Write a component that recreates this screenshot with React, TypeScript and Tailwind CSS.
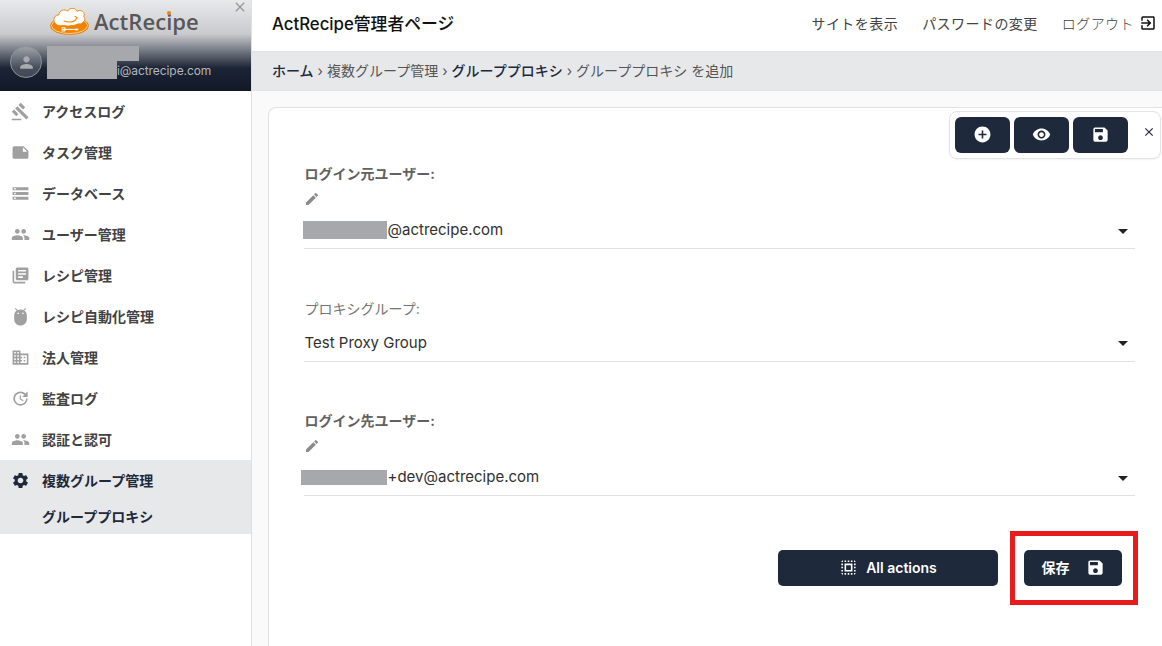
import type { ReactNode } from 'react';
import type { IconType } from 'react-icons';
import {
    MdAddCircle,
    MdArrowDropDown,
    MdClose,
    MdDomain,
    MdEdit,
    MdExitToApp,
    MdGavel,
    MdLibraryBooks,
    MdNote,
    MdPeople,
    MdPerson,
    MdRemoveRedEye,
    MdSave,
    MdSelectAll,
    MdSettings,
    MdStorage,
    MdUpdate,
} from 'react-icons/md';

interface MenuItem {
    label: string;
    icon: IconType;
}

const BugIcon: IconType = ({ size = 18, className }) => (
    <svg className={className} width={size} height={size} viewBox="0 0 24 24" fill="currentColor">
        <path
            fillRule="evenodd"
            d="M4 15.500c0 4.400 3.600 8 8 8s8-3.600 8-8V10.500c0-2.500-1.200-4.700-3.200-6.100l2.300-2.300-.820-.830-2.600 2.500C14.600 3.200 13.300 3 12 3s-2.600.2-3.700.750L5.700 1.270l-.820.830 2.300 2.300C5.200 5.800 4 8 4 10.500v5zM9 7a1 1 0 1 0 0 2 1 1 0 0 0 0-2zm6 0a1 1 0 1 0 0 2 1 1 0 0 0 0-2z"
        />
    </svg>
);

const menuItems: MenuItem[] = [
    { label: 'アクセスログ', icon: MdGavel },
    { label: 'タスク管理', icon: MdNote },
    { label: 'データベース', icon: MdStorage },
    { label: 'ユーザー管理', icon: MdPeople },
    { label: 'レシピ管理', icon: MdLibraryBooks },
    { label: 'レシピ自動化管理', icon: BugIcon },
    { label: '法人管理', icon: MdDomain },
    { label: '監査ログ', icon: MdUpdate },
    { label: '認証と認可', icon: MdPeople },
];

function Logo() {
    return (
        <div className="flex items-center pt-[7px] pl-[50px]">
            <svg width="40" height="29" viewBox="0 0 40 29">
                <ellipse cx="19.5" cy="18.7" rx="19.3" ry="9.1" fill="#f08300" />
                <ellipse cx="19.5" cy="18.5" rx="18" ry="8" fill="none" stroke="#fff" strokeWidth="0.6" />
                <path
                    d="M7 18C3.500 16.500 1.500 8.500 9 7.800c0-4.500 6-6.300 8.500-3.600C19.500.3 26 .8 27 4.300c4-2.300 9 1.200 6.700 5.200 3 3.500-.7 5.500-2.700 7.500-3.500-1-5 1.500-8 1.500s-4 1-7 .3-6 .7-9-.8z"
                    fill="#fff"
                    stroke="#f08300"
                    strokeWidth="0.9"
                />
                <path d="M14 14c4 1.800 12 1.600 12.500-3.500M25 9.500c1 .2 1.800.6 2.200 1.500" fill="none" stroke="#f08300" strokeWidth="1.100" strokeLinecap="round" />
                <path d="M11.500 20.800h3.500v3.200h-3.500M11.500 22.400h15" fill="none" stroke="#fff" strokeWidth="1" />
                <ellipse cx="26.500" cy="22.400" rx="2" ry="1" fill="#fff" />
            </svg>
            <span className="ml-1 font-['Open_Sans'] text-[22px] leading-[27px] font-semibold tracking-[0.05px] text-[#595757]">
                ActRec
                <span className="relative">
                    i
                    <span className="absolute top-[5px] left-px h-1 w-1 rounded-full bg-[#f08300]" />
                </span>
                pe
            </span>
        </div>
    );
}

function Sidebar() {
    return (
        <aside className="w-[252px] shrink-0 border-r border-[#e0e0e0] bg-white">
            <div className="relative h-[91px] bg-[linear-gradient(to_bottom,#e9eaec_0px,#c9cacd_34px,#1c2536_68px,#111927_91px)]">
                <Logo />
                <MdClose className="absolute top-[-1px] right-[3px] text-[#999]" size={16} />
                <div className="flex pt-[10px] pl-[10px]">
                    <div className="flex h-8 w-8 items-center justify-center rounded-full border border-[#8d929b] bg-[#ffffff30] text-[#aaabae]">
                        <MdPerson size={19} />
                    </div>
                    <div className="ml-[5px]">
                        <div className="h-[15px] w-[92px] bg-[#a7a8ac]" />
                        <div className="flex">
                            <div className="h-[18px] w-[70px] bg-[#a7a8ac]" />
                            <span className="text-[12px] leading-[20px] tracking-[-0.08px] text-[#b5b8be]">i@actrecipe.com</span>
                        </div>
                    </div>
                </div>
            </div>
            <nav className="text-[14px] font-bold text-[#424242]">
                {menuItems.map(({ label, icon: Icon }) => (
                    <a key={label} className="flex h-[41px] items-center pl-[11px]">
                        <Icon className="text-[#a0a0a0]" size={19} />
                        <span className="ml-3 pb-px">{label}</span>
                    </a>
                ))}
                <div className="h-[74px] bg-[#e6e8ea] text-[#1e293b]">
                    <a className="flex h-[41px] items-center pl-[11px]">
                        <MdSettings size={19} />
                        <span className="ml-3 pb-px">複数グループ管理</span>
                    </a>
                    <a className="flex h-[33px] items-center pb-[2px] pl-[42px]">グループプロキシ</a>
                </div>
            </nav>
        </aside>
    );
}

function Header() {
    return (
        <header className="flex h-[51px] items-center justify-between bg-white pr-[5px] pl-5">
            <h1 className="pb-[2px] text-[16.8px] font-medium text-[#111]">ActRecipe管理者ページ</h1>
            <div className="flex items-center gap-6 pb-[5px] text-[14px] tracking-[0.45px] text-[#424242]">
                <a>サイトを表示</a>
                <a>パスワードの変更</a>
                <a className="flex items-center font-light">
                    ログアウト
                    <MdExitToApp className="ml-[5px] text-[#111]" size={18} />
                </a>
            </div>
        </header>
    );
}

function Breadcrumbs() {
    return (
        <div className="flex h-10 items-center gap-1 border-t border-b border-[#e2e3e5] bg-[#e6e8ea] pb-[2px] pl-5 text-[14px] text-[#555]">
            <a className="font-medium text-[#1e293b]">ホーム</a>
            <span>›</span>
            <span>複数グループ管理</span>
            <span>›</span>
            <a className="font-medium text-[#1e293b]">グループプロキシ</a>
            <span>›</span>
            <span>グループプロキシ を追加</span>
        </div>
    );
}

interface SelectFieldProps {
    label: string;
    required?: boolean;
    className?: string;
    children: ReactNode;
}

function SelectField({ label, required = false, className = '', children }: SelectFieldProps) {
    return (
        <div className={`border-b border-[#e2e2e2] ${className}`}>
            <label className={`block pl-[0.5px] text-[14px] leading-5 ${required ? 'font-bold text-[#616161]' : 'text-[#757575]'}`}>{label}</label>
            {required && <MdEdit className="mt-[7px] text-[#8a8a8a]" size={16} />}
            <div className={`flex h-9 items-center justify-between ${required ? 'mt-[5px]' : 'mt-[6px]'}`}>
                <div className="flex items-center text-[15px] text-[#303030]">{children}</div>
                <MdArrowDropDown className={required ? 'mt-[2px] text-[#222]' : 'text-[#222]'} size={24} />
            </div>
        </div>
    );
}

function Toolbar() {
    const button = 'flex h-9 w-[55px] shrink-0 items-center justify-center rounded-md bg-[#1e293b] pb-px text-white';
    return (
        <div className="absolute top-[3px] right-[1px] flex h-12 w-[212px] gap-1 rounded-lg border border-[#e4e4e4] bg-white p-[5px] shadow-xs">
            <button className={button}>
                <MdAddCircle size={19} />
            </button>
            <button className={button}>
                <MdRemoveRedEye size={19} />
            </button>
            <button className={button}>
                <MdSave size={19} />
            </button>
            <MdClose className="mt-[8px] ml-[10px] shrink-0 text-[#1e293b]" size={14} />
        </div>
    );
}

export default function App() {
    return (
        <div lang="ja" className="flex h-[646px] w-[1162px] overflow-hidden bg-[#fafafa] font-[Inter,'Noto_Sans_CJK_JP',sans-serif]">
            <Sidebar />
            <div className="flex min-w-0 flex-1 flex-col">
                <Header />
                <Breadcrumbs />
                <main className="relative mt-4 ml-4 flex-1 rounded-tl-lg border-t border-l border-[#e2e2e2] bg-white pr-[27px] pl-[35px]">
                    <Toolbar />
                    <SelectField label="ログイン元ユーザー:" required className="mt-[56px] h-[85px]">
                        <div className="ml-[-1px] h-[18px] w-[84px] bg-[#a7a8ac]" />
                        <span className="ml-[0.5px]">@actrecipe.com</span>
                    </SelectField>
                    <SelectField label="プロキシグループ:" className="mt-[50px] h-[63px]">
                        <span className="pl-[0.5px]">Test Proxy Group</span>
                    </SelectField>
                    <SelectField label="ログイン先ユーザー:" required className="mt-[49px] h-[85px]">
                        <div className="ml-[-3px] h-[15px] w-[86px] bg-[#a7a8ac]" />
                        <span className="ml-[0.5px]">+dev@actrecipe.com</span>
                    </SelectField>
                    <div className="mt-[35px] mr-[-3px] flex items-center justify-end gap-3">
                        <button className="flex h-9 w-[220px] items-center justify-center gap-2 rounded-[5px] bg-[#1e293b] pb-px text-[14px] font-semibold text-white">
                            <MdSelectAll size={19} />
                            All actions
                        </button>
                        <div className="border-[5px] border-[#e81c1c] py-[14px] pr-[11px] pl-[9px]">
                            <button className="flex h-9 w-[98px] items-center justify-center gap-4 rounded-[5px] bg-[#1e293b] pb-px text-[14px] font-bold text-white">
                                保存
                                <MdSave size={19} />
                            </button>
                        </div>
                    </div>
                </main>
            </div>
        </div>
    );
}
